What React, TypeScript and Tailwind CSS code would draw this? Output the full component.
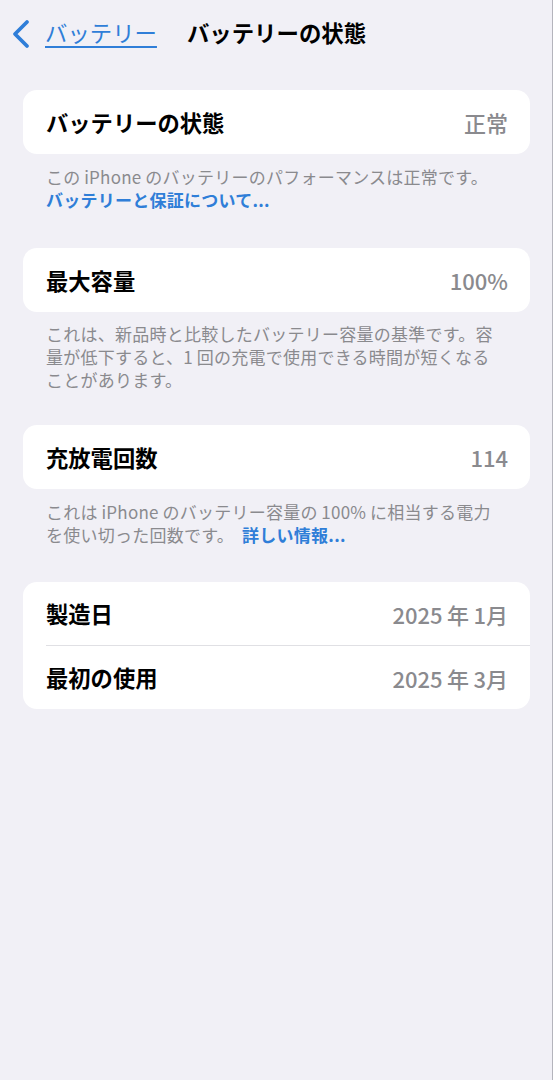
import React from "react";

const font = { fontFamily: '"Noto Sans CJK JP", "Noto Sans", sans-serif' };

function Row({ label, value, h = "h-[64px]" }: { label: string; value: string; h?: string }) {
  return (
    <div className={`flex ${h} items-center justify-between pl-[23px] pr-[22px]`}>
      <span className="text-[22.3px] font-bold leading-none text-black">{label}</span>
      <span className="text-[22px] font-medium leading-none text-[#8a8a8e]">{value}</span>
    </div>
  );
}

function Card({ children }: { children: React.ReactNode }) {
  return <div className="ml-[23px] mr-[22px] overflow-hidden rounded-[14px] bg-white">{children}</div>;
}

const foot = "pl-[46px] pr-[10px] text-[17px] leading-[23px] tracking-[0.25px] text-[#8a8a8e]";

export default function App() {
  return (
    <div
      className="min-h-[1080px] w-full border-r border-[#b4b4bc] bg-[#f1f0f6]"
      style={font}
    >
      <div className="flex h-[68px] items-center pl-[11px]">
        <svg width="20" height="30" viewBox="0 0 20 30" className="mr-[14px] shrink-0">
          <path
            d="M16 3 L4 15 L16 27"
            fill="none"
            stroke="#2f7ed8"
            strokeWidth="3.8"
            strokeLinecap="round"
            strokeLinejoin="round"
          />
        </svg>
        <span className="-mt-[3px] text-[22.4px] leading-none text-[#2f7ed8] underline decoration-[1.5px] underline-offset-[4px]">
          バッテリー
        </span>
        <span className="-mt-[3px] ml-[30px] text-[22.4px] font-bold leading-none text-black">
          バッテリーの状態
        </span>
      </div>

      <div className="pt-[22px]">
        <Card>
          <Row label="バッテリーの状態" value="正常" />
        </Card>
        <div className={`mt-[11px] ${foot}`}>
          この&thinsp;iPhone&thinsp;のバッテリーのパフォーマンスは正常です。
          <br />
          <span className="font-bold text-[#2f7ed8]">バッテリーと保証について...</span>
        </div>

        <div className="mt-[37px]">
          <Card>
            <Row label="最大容量" value="100%" />
          </Card>
        </div>
        <div className={`mt-[10px] ${foot}`}>
          これは、新品時と比較したバッテリー容量の基準です。容
          <br />
          量が低下すると、1&thinsp;回の充電で使用できる時間が短くなる
          <br />
          ことがあります。
        </div>

        <div className="mt-[34px]">
          <Card>
            <Row label="充放電回数" value="114" />
          </Card>
        </div>
        <div className={`mt-[11px] ${foot}`}>
          これは&thinsp;iPhone&thinsp;のバッテリー容量の&thinsp;100%&thinsp;に相当する電力
          <br />
          を使い切った回数です。 <span className="ml-[4px] font-bold text-[#2f7ed8]">詳しい情報...</span>
        </div>

        <div className="mt-[36px]">
          <Card>
            <Row label="製造日" value={"2025\u2009年\u20091月"} h="h-[63px]" />
            <div className="ml-[23px] h-px bg-[#e0e0e4]" />
            <Row label="最初の使用" value={"2025\u2009年\u20093月"} h="h-[63px]" />
          </Card>
        </div>
      </div>
    </div>
  );
}
